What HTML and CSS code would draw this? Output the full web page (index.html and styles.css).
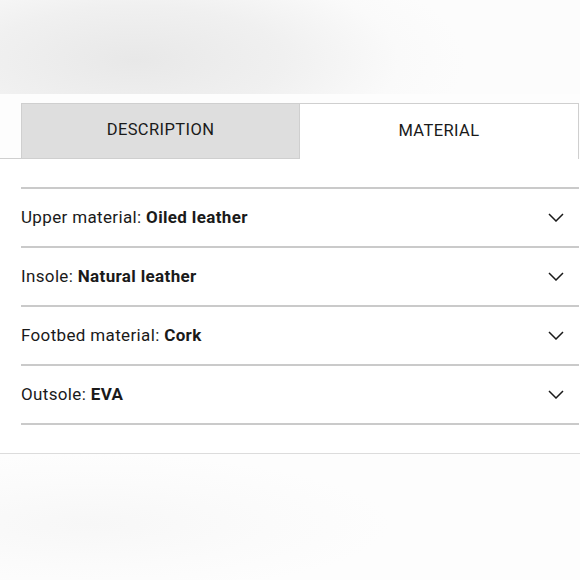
FILE: index.html
```html
<!DOCTYPE html>
<html lang="en">
<head>
<meta charset="utf-8">
<link rel="stylesheet" href="styles.css">
</head>
<body>
<div class="hero"></div>
<div class="tabs">
  <div class="tab-lead"></div>
  <div class="tab tab-inactive">DESCRIPTION</div>
  <div class="tab tab-active">MATERIAL</div>
</div>
<div class="panel">
  <div class="list">
    <div class="row"><span class="label">Upper material: <b>Oiled leather</b></span><svg class="chev" width="16" height="9" viewBox="0 0 16 9"><path d="M1 1 L8 8 L15 1" fill="none" stroke="#1a1a1a" stroke-width="1.5"/></svg></div>
    <div class="row"><span class="label">Insole: <b>Natural leather</b></span><svg class="chev" width="16" height="9" viewBox="0 0 16 9"><path d="M1 1 L8 8 L15 1" fill="none" stroke="#1a1a1a" stroke-width="1.5"/></svg></div>
    <div class="row"><span class="label">Footbed material: <b>Cork</b></span><svg class="chev" width="16" height="9" viewBox="0 0 16 9"><path d="M1 1 L8 8 L15 1" fill="none" stroke="#1a1a1a" stroke-width="1.5"/></svg></div>
    <div class="row row-last"><span class="label">Outsole: <b>EVA</b></span><svg class="chev" width="16" height="9" viewBox="0 0 16 9"><path d="M1 1 L8 8 L15 1" fill="none" stroke="#1a1a1a" stroke-width="1.5"/></svg></div>
  </div>
</div>
<div class="footer-fade"></div>
</body>
</html>
```
FILE: styles.css
```css
html, body {
  margin: 0;
  padding: 0;
  background: #fdfdfd;
  font-family: Roboto, "Liberation Sans", sans-serif;
  color: #1a1a1a;
}
.hero {
  height: 94px;
  background: radial-gradient(ellipse 330px 120px at 135px 60px, #e8e8e8 0%, #f0f0f0 45%, #fafafa 80%, #fcfcfc 100%);
}
.tabs {
  display: flex;
  margin-top: 9px;
  height: 56px;
}
.tab-lead {
  width: 21px;
  border-bottom: 1px solid #cfcfcf;
}
.tab {
  width: 279px;
  box-sizing: border-box;
  display: flex;
  align-items: center;
  justify-content: center;
  font-size: 16.5px;
  letter-spacing: 0.4px;
  border: 1px solid #cfcfcf;
  padding-bottom: 3px;
}
.tab-inactive {
  background: #dedede;
}
.tab-active {
  background: #fff;
  border-left: none;
  border-bottom: none;
}
.panel {
  background: #fff;
  padding: 28px 1px 28px 21px;
  border-bottom: 1px solid #dcdcdc;
}
.list {
  display: flex;
  flex-direction: column;
}
.row {
  height: 57px;
  border-top: 2px solid #cacaca;
  display: flex;
  align-items: center;
  justify-content: space-between;
  padding-right: 15px;
  font-size: 17px;
  letter-spacing: 0.35px;
}
.row-last {
  border-bottom: 2px solid #cacaca;
}
.label {
  padding-bottom: 2px;
}
.label b {
  font-weight: 700;
}
.chev {
  display: block;
  margin-top: 0;
}
.footer-fade {
  height: 126px;
  background: radial-gradient(ellipse 300px 70px at 90px 70px, #f7f7f7 0%, #fbfbfb 60%, #fdfdfd 100%);
}
```
